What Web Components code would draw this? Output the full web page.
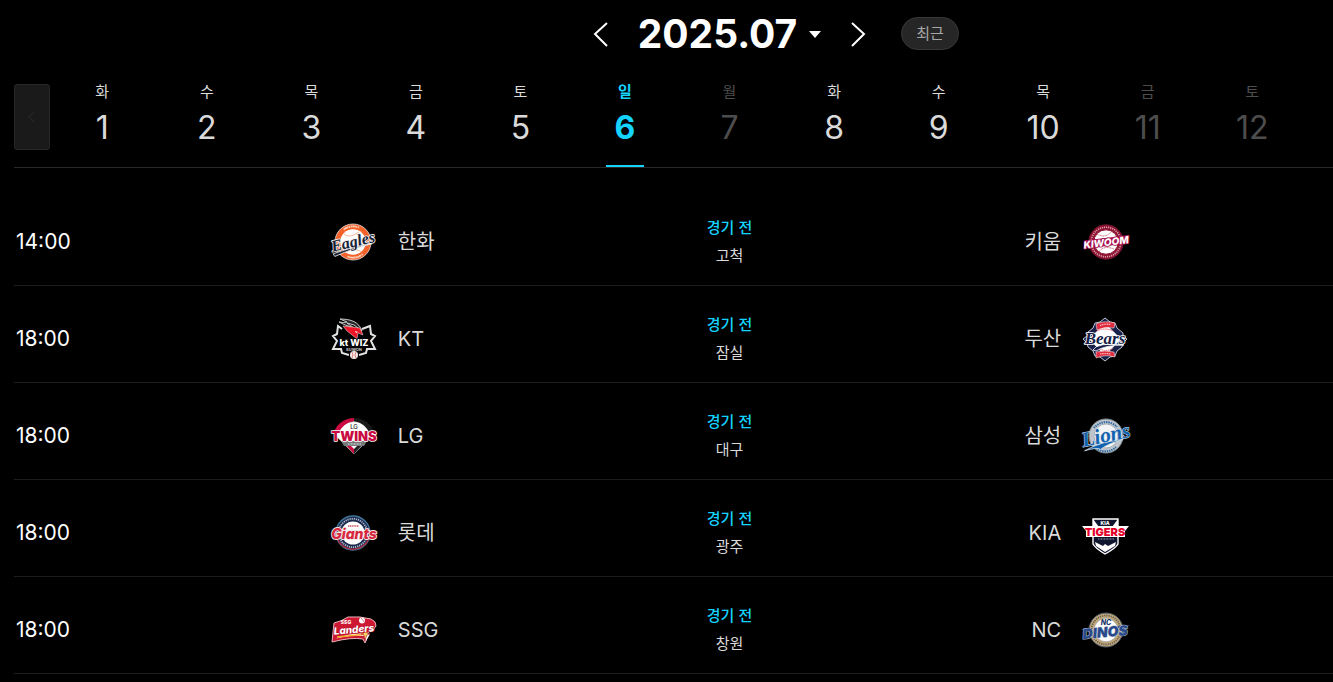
<!DOCTYPE html>
<html lang="ko">
<head>
<meta charset="utf-8">
<meta name="viewport" content="width=device-width, initial-scale=1">
<title>경기 일정</title>
<style>
    body {
        margin: 0;
        background: #000;
        color: #dadada;
        font-family: Inter, "Noto Sans CJK KR", sans-serif;
    }
</style>
</head>
<body>
<schedule-page></schedule-page>

<script>
const DAYS = [
    ["화", 1], ["수", 2], ["목", 3], ["금", 4], ["토", 5], ["일", 6, "selected"],
    ["월", 7, "off"], ["화", 8], ["수", 9], ["목", 10], ["금", 11, "off"], ["토", 12, "off"]
];

const GAMES = [
    { time: "14:00", away: ["한화", "eagles"], home: ["키움", "kiwoom"], place: "고척" },
    { time: "18:00", away: ["KT", "wiz"], home: ["두산", "bears"], place: "잠실" },
    { time: "18:00", away: ["LG", "twins"], home: ["삼성", "lions"], place: "대구" },
    { time: "18:00", away: ["롯데", "giants"], home: ["KIA", "tigers"], place: "광주" },
    { time: "18:00", away: ["SSG", "landers"], home: ["NC", "dinos"], place: "창원" }
];

const LOGOS = {
    eagles: `
        <circle cx="24" cy="25" r="18" fill="#f4622a" stroke="#ddd" stroke-width=".8"/>
        <circle cx="24" cy="25" r="15.6" fill="none" stroke="#fbd0b8" stroke-width="1.6" stroke-dasharray="1.4 .8 1.4 .8 1.4 .8 1.4 .8 1.4 .8 1.4 34.4" transform="rotate(-113 24 25)"/>
        <circle cx="24" cy="25" r="15.6" fill="none" stroke="#fbd0b8" stroke-width="1.6" stroke-dasharray="1.4 .8 1.4 .8 1.4 .8 1.4 .8 1.4 .8 1.4 34.4" transform="rotate(65 24 25)"/>
        <circle cx="24" cy="25" r="12.8" fill="#fff"/>
        <path d="M15 17q5 5 15-2M17 35q7-5 16 0" fill="none" stroke="#f6a57d" stroke-width=".8"/>
        <g transform="rotate(-13 24 25)">
            <path d="M2 32Q22 29 42 31Q24 31 3 35Z" fill="#182237" stroke="#e8e8e8" stroke-width=".8"/>
            <text x="24" y="30" class="script" font-size="16" fill="#182237" stroke="#eee" stroke-width="1.6">Eagles</text>
        </g>`,
    kiwoom: `
        <circle cx="26" cy="25" r="17.2" fill="#8e1331" stroke="#6f1430" stroke-width="1"/>
        <circle cx="26" cy="25" r="14.8" fill="none" stroke="#d8a0ae" stroke-width="1.6" stroke-dasharray="1.2 .9"/>
        <circle cx="26" cy="25" r="12.2" fill="#fff" stroke="#8e1331"/>
        <path d="M17 17q9 5 15-3M19 35q4-7 15-3" fill="none" stroke="#c6546d" stroke-width="1" stroke-dasharray="1 .6"/>
        <g transform="rotate(-7 26 25)">
            <path d="M4 29H46L48 21H6Z" fill="#a70f50"/>
            <text x="26" y="29" class="block italic" font-size="10" fill="#fff" stroke="#a70f50" stroke-width="1.6">KIWOOM</text>
        </g>`,
    wiz: `
        <path d="M13 15L9 12L8 20L4 22L8 27L4 35L12 35L13 39L20 41M30 41L37 39L38 35L46 35L42 27L46 22L42 20L41 12L33 15" fill="none" stroke="#e2e2e2" stroke-width="2"/>
        <path d="M11 5C22 5 30 8 33 17L25 11L18 9Q22 12 25 14Q15 11 10 8Q15 9 18 8Z" fill="#29272a" stroke="#ddd" stroke-width=".9"/>
        <path d="M14 12Q24 13 31 14L34 21L29 19L28 25L23 21L18 17Z" fill="#f01526" stroke="#eee" stroke-width=".5"/>
        <path d="M26 17l3 1-2 1z" fill="#fff"/>
        <text x="25" y="32" class="block" font-size="9" fill="#fff" stroke="#000" stroke-width="1.5">kt WIZ</text>
        <text x="25" y="37" class="block" font-size="4" fill="#bbb">SUWON</text>
        <circle cx="25" cy="41" r="4" fill="#f4e9e6"/>
        <path d="M23 38q2 3 0 6M27 38q-2 3 0 6" stroke="#d76767" stroke-width=".8" fill="none"/>`,
    bears: `
        <path d="M25 4L30 8L35 9L37 14L43 19L43 22L47 25L43 29L42 33L37 37L35 42L30 43L25 47L20 43L15 42L13 37L8 33L7 29L3 25L7 22L8 18L13 14L15 9L20 8Z" fill="#19214b" stroke="#bfc2d1" stroke-width="1"/>
        <path d="M25 9L41 25L25 42L9 25Z" fill="#fff"/>
        <path d="M17 17q8-4 16 0M18 34q8 5 15 0" stroke="#e35864" stroke-width="1" fill="none" stroke-dasharray="1.5 .6"/>
        <path d="M16 10Q25 6 35 9L34 14Q25 12 17 16ZM16 38Q25 36 34 38L35 43Q25 40 16 44Z" fill="#e2293d" stroke="#f0dce0" stroke-width=".6"/>
        <path d="M20 11.5q5-2 11-1M20 40q5-1 11 0" stroke="#ffc3c5" stroke-width="1.2" stroke-dasharray="1.2 .6" fill="none"/>
        <path d="M13 36Q17 28 44 31Q25 31 16 37Z" fill="#151d48" stroke="#fff" stroke-width=".8"/>
        <text x="25" y="30" class="script" font-size="17" fill="#151d48" stroke="#fff" stroke-width="1.6">Bears</text>`,
    twins: `
        <path d="M5 23A21 18 0 0 1 45 23L25 43Z" fill="#fff" stroke="#999" stroke-width="1"/>
        <path d="M5 22A21 18 0 0 1 25 7V10A19 16 0 0 0 10 22Z" fill="#c90b42"/>
        <path d="M45 22A21 18 0 0 0 25 7V10A19 16 0 0 1 40 22Z" fill="#191919"/>
        <path d="M14 31L25 43V38L20 33Z" fill="#c90b42"/>
        <path d="M36 31L25 43V38L30 33Z" fill="#222"/>
        <path d="M12 30H38L35 35H15Z" fill="#77797b"/>
        <path d="M19 33H32" stroke="#ddd" stroke-width="1" stroke-dasharray="1 .5"/>
        <text x="25" y="18" class="block thin" font-size="6" fill="#222">LG</text>
        <text x="25" y="30" class="block heavy" font-size="13" fill="#c90b42" stroke="#fff" stroke-width="1.4">TWINS</text>`,
    lions: `
        <circle cx="26" cy="25" r="17" fill="#bfc5ca" stroke="#7e8b94" stroke-width="1"/>
        <path d="M14 17A15 15 0 0 1 37 16M16 37A15 15 0 0 0 36 36" fill="none" stroke="#2867a5" stroke-width="2" stroke-dasharray="1.4 .9"/>
        <circle cx="26" cy="25" r="12" fill="#f2f3f4" stroke="#95a1aa" stroke-width=".8"/>
        <g transform="rotate(-12 26 25)">
            <path d="M2 35Q20 29 42 32Q25 33 18 37Q16 34 2 35Z" fill="#1262b0" stroke="#ccdbe7" stroke-width=".8"/>
            <text x="26" y="31" class="script" font-size="21" fill="#1262b0" stroke="#d4e0e9" stroke-width="1">Lions</text>
        </g>`,
    giants: `
        <circle cx="24" cy="25" r="17" fill="#1c2a4e" stroke="#42759b" stroke-width="1.4"/>
        <path d="M8 30A17 17 0 0 0 40 30" fill="none" stroke="#a52b3f" stroke-width="1.4"/>
        <circle cx="24" cy="25" r="14.2" fill="none" stroke="#aebccd" stroke-width="1.8" stroke-dasharray="1.2 .9"/>
        <circle cx="24" cy="25" r="11.5" fill="#fff"/>
        <path d="M19 18H30" stroke="#cc4f5c" stroke-width="1.4" stroke-dasharray="1.2 .6"/>
        <text x="25" y="31" class="block italic" font-size="14" fill="#d7263d" stroke="#f3e6e8" stroke-width="1.8">Giants</text>`,
    tigers: `
        <path d="M13 11H38V36Q36 40 25 46Q15 40 13 36Z" fill="#10162d" stroke="#fff" stroke-width="1.4"/>
        <path d="M13 11L19 19H13ZM38 11L32 19H38Z" fill="#fff"/>
        <path d="M15 34L23 38L25 36L28 38L36 34L35 38L25 44L16 38Z" fill="#fff"/>
        <path d="M18 31H34" stroke="#8d93a5" stroke-width="1.2" stroke-dasharray="1 .5"/>
        <text x="25" y="17" class="block" font-size="5" fill="#fff">KIA</text>
        <path d="M2 18H49L45 23V29H6V23Z" fill="#fff"/>
        <text x="25" y="28" class="block heavy" font-size="11" fill="#e4002b">TIGERS</text>`,
    landers: `
        <path d="M5 18Q13 16 19 12H31L36 13Q43 13 46 17L47 21L44 25L38 28L39 31L36 38L34 34Q22 32 3 37Z" fill="#ce1733" stroke="#e9b4bb" stroke-width="1"/>
        <path d="M6 34Q23 27 41 29L37 36L35 31Q22 29 6 34Z" fill="#fff"/>
        <path d="M8 32L38 29" stroke="#f4b42e" stroke-width="1.4"/>
        <path d="M36 24L38 28L41 29L38 30L36 35L35 30L32 29L35 28Z" fill="#f8d25d" stroke="#b3132d" stroke-width=".6"/>
        <circle cx="33" cy="15.5" r="3" fill="#fff"/>
        <path d="M32 13q2 2 3 4" stroke="#d34b5b" stroke-width=".7" fill="none"/>
        <text x="17" y="19" class="block" font-size="5" fill="#fff">SSG</text>
        <text x="25" y="28" class="block italic" font-size="10" fill="#fff" stroke="#ae0f2b" stroke-width="1" transform="rotate(-5 25 25)">Landers</text>`,
    dinos: `
        <circle cx="26" cy="25" r="17" fill="#c2a878" stroke="#4d5969" stroke-width="1"/>
        <circle cx="26" cy="25" r="14.5" fill="none" stroke="#625d56" stroke-width="1.8" stroke-dasharray="1.2 1"/>
        <circle cx="26" cy="25" r="11.8" fill="#fff" stroke="#8a9099" stroke-width=".6"/>
        <text x="26" y="20" class="block italic" font-size="7" fill="#1c3665">NC</text>
        <g transform="rotate(-5 26 25)">
            <path d="M1 22H12V24H5ZM38 22H50L47 24H38Z" fill="#29498a"/>
            <text x="25" y="32" class="block heavy italic" font-size="14" fill="#29498a" stroke="#b9c4d8" stroke-width="1">DINOS</text>
        </g>`
};

class TeamLogo extends HTMLElement {
    constructor() {
        super();
        this.attachShadow({ mode: "open" });
    }
    connectedCallback() {
        this.shadowRoot.innerHTML = `
            <style>
                :host {
                    display: block;
                    flex: none;
                    width: 50px;
                    height: 50px;
                }
                svg {
                    display: block;
                    width: 100%;
                    height: 100%;
                    overflow: visible;
                }
                text {
                    text-anchor: middle;
                    paint-order: stroke;
                    stroke-linejoin: round;
                }
                .script {
                    font-family: "Liberation Serif", serif;
                    font-weight: 700;
                    font-style: italic;
                }
                .block {
                    font-family: Inter, sans-serif;
                    font-weight: 800;
                }
                .heavy {
                    font-weight: 900;
                }
                .thin {
                    font-weight: 500;
                }
                .italic {
                    font-style: italic;
                }
            </style>
            <svg viewBox="0 0 50 50" aria-hidden="true">${LOGOS[this.getAttribute("team")]}</svg>
        `;
    }
}

class MonthPicker extends HTMLElement {
    constructor() {
        super();
        this.attachShadow({ mode: "open" });
    }
    connectedCallback() {
        this.shadowRoot.innerHTML = `
            <style>
                :host {
                    display: grid;
                    grid-template-columns: 1fr auto 1fr;
                    align-items: center;
                    height: 67px;
                }
                nav {
                    grid-column: 2;
                    display: flex;
                    align-items: center;
                    gap: 30px;
                }
                button {
                    display: flex;
                    align-items: center;
                    padding: 0;
                    border: 0;
                    background: none;
                    color: #fff;
                    font: inherit;
                    cursor: pointer;
                }
                svg {
                    display: block;
                }
                .month {
                    gap: 12px;
                    font-size: 39px;
                    font-weight: 700;
                    line-height: 48px;
                }
                .recent {
                    justify-self: start;
                    margin-left: 35px;
                    padding: 0 14px;
                    border: 1px solid #393939;
                    border-radius: 17px;
                    background: #262626;
                    color: #a6a6a6;
                    font-size: 15px;
                    line-height: 31px;
                }
            </style>
            <nav aria-label="월 선택">
                <button type="button" aria-label="이전 달">
                    <svg width="15" height="26" viewBox="0 0 15 26" fill="none" stroke="#fff" stroke-width="2"><path d="M14 2L2 13L14 25"/></svg>
                </button>
                <button type="button" class="month">
                    <slot></slot>
                    <svg width="12" height="8" viewBox="0 0 12 8" fill="#fff"><path d="M0 1H12L6 8Z"/></svg>
                </button>
                <button type="button" aria-label="다음 달">
                    <svg width="15" height="26" viewBox="0 0 15 26" fill="none" stroke="#fff" stroke-width="2"><path d="M1 2L13 13L1 25"/></svg>
                </button>
            </nav>
            <button type="button" class="recent">최근</button>
        `;
    }
}

class DayStrip extends HTMLElement {
    constructor() {
        super();
        this.attachShadow({ mode: "open" });
    }
    connectedCallback() {
        const days = DAYS.map(([name, date, state = ""]) => `
            <button type="button" class="day ${state}" ${state === "off" ? "disabled" : ""}>
                <span class="name">${name}</span>
                <span class="date">${date}</span>
            </button>`).join("");

        this.shadowRoot.innerHTML = `
            <style>
                :host {
                    display: flex;
                    margin-top: 13px;
                    padding-right: 36px;
                    border-bottom: 1px solid #292929;
                }
                button {
                    margin: 0;
                    padding: 0;
                    border: 0;
                    background: none;
                    color: inherit;
                    font: inherit;
                }
                .prev {
                    display: flex;
                    flex: none;
                    align-items: center;
                    justify-content: center;
                    box-sizing: border-box;
                    width: 36px;
                    height: 66px;
                    margin-top: 4px;
                    border: 1px solid #272727;
                    border-radius: 3px;
                    background: #1a1a1a;
                }
                .days {
                    flex: 1;
                    display: grid;
                    grid-template-columns: repeat(13, 1fr);
                }
                .day {
                    display: flex;
                    flex-direction: column;
                    align-items: center;
                    justify-self: center;
                    box-sizing: border-box;
                    min-width: 38px;
                    height: 87px;
                    padding-top: 1px;
                    border-bottom: 2px solid transparent;
                }
                .name {
                    font-size: 15px;
                    line-height: 22px;
                }
                .date {
                    margin-top: 7px;
                    font-size: 32px;
                    line-height: 36px;
                }
                .selected {
                    border-color: #14d3ff;
                    color: #14d3ff;
                    font-weight: 700;
                }
                .off {
                    color: #4d4d4d;
                }
            </style>
            <button type="button" class="prev" aria-label="이전 날짜" disabled>
                <svg width="8" height="12" viewBox="0 0 8 12" fill="none" stroke="#2c2c2c"><path d="M6 1L1 6L6 11"/></svg>
            </button>
            <div class="days">${days}</div>
        `;
    }
}

class GameRow extends HTMLElement {
    constructor() {
        super();
        this.attachShadow({ mode: "open" });
    }
    connectedCallback() {
        this.shadowRoot.innerHTML = `
            <style>
                :host {
                    display: grid;
                    grid-template-columns: 22% 1fr 1fr 1fr 22%;
                    align-items: center;
                    padding: 25px 0 15px;
                    border-bottom: 1px solid #1c1c1c;
                    font-size: 20px;
                    line-height: 28px;
                }
                .time {
                    padding-left: 2px;
                    color: #fff;
                    font-size: 21px;
                }
                .team {
                    display: flex;
                    align-items: center;
                    gap: 19px;
                }
                .home {
                    justify-content: flex-end;
                }
                .info {
                    font-size: 15px;
                    text-align: center;
                }
                .state {
                    color: #14d3ff;
                    font-weight: 500;
                }
            </style>
            <div class="time"><slot name="time"></slot></div>
            <div class="team">
                <team-logo team="${this.getAttribute("away")}"></team-logo>
                <slot name="away"></slot>
            </div>
            <div class="info">
                <div class="state">경기 전</div>
                <div><slot name="place"></slot></div>
            </div>
            <div class="team home">
                <slot name="home"></slot>
                <team-logo team="${this.getAttribute("home")}"></team-logo>
            </div>
        `;
    }
}

class SchedulePage extends HTMLElement {
    constructor() {
        super();
        this.attachShadow({ mode: "open" });
    }
    connectedCallback() {
        const rows = GAMES.map(game => `
            <game-row role="listitem" away="${game.away[1]}" home="${game.home[1]}">
                <time slot="time">${game.time}</time>
                <span slot="away">${game.away[0]}</span>
                <span slot="place">${game.place}</span>
                <span slot="home">${game.home[0]}</span>
            </game-row>`).join("");

        this.shadowRoot.innerHTML = `
            <style>
                :host {
                    display: block;
                    overflow: hidden;
                }
                .board {
                    box-sizing: border-box;
                    min-width: 1459px;
                    padding: 0 14px;
                }
                .games {
                    padding-top: 21px;
                }
            </style>
            <div class="board">
                <month-picker>2025.07</month-picker>
                <day-strip></day-strip>
                <div class="games" role="list">${rows}</div>
            </div>
        `;
    }
}

customElements.define("team-logo", TeamLogo);
customElements.define("month-picker", MonthPicker);
customElements.define("day-strip", DayStrip);
customElements.define("game-row", GameRow);
customElements.define("schedule-page", SchedulePage);
</script>
</body>
</html>
